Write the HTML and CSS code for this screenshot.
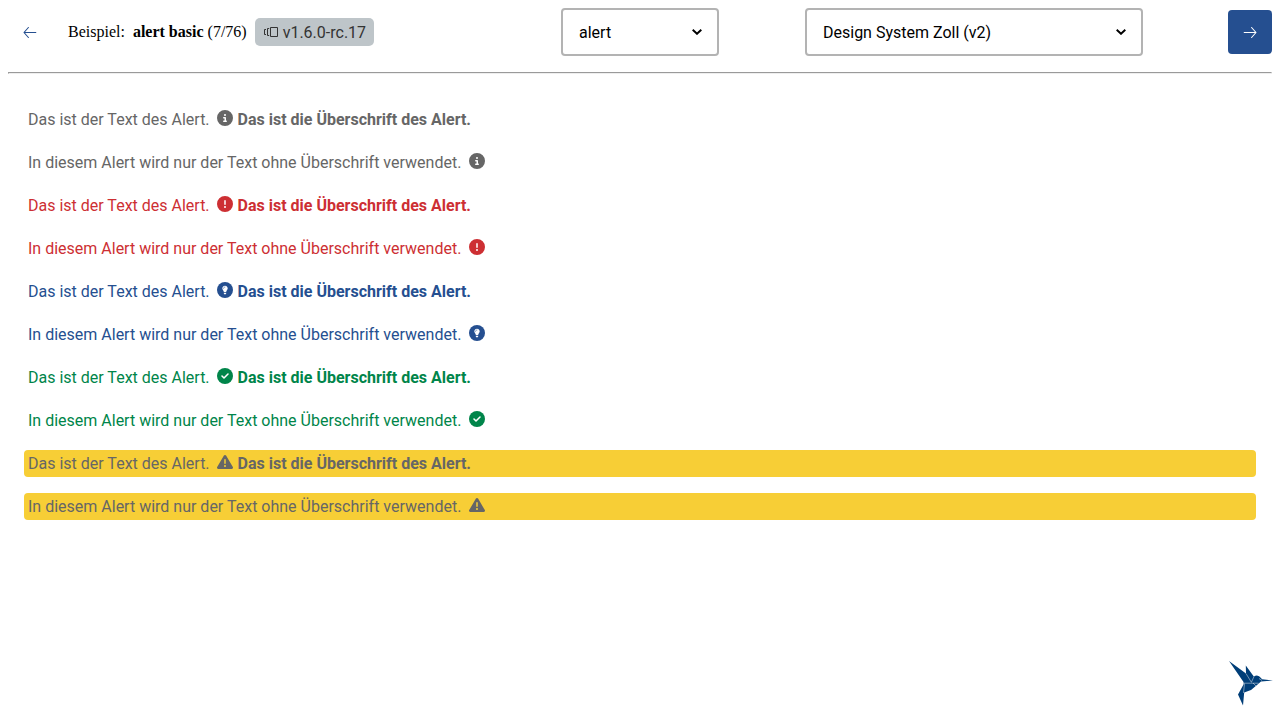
FILE: index.html
```html
<!DOCTYPE html>
<html lang="de">
<head>
<meta charset="utf-8">
<title>alert basic</title>
<link rel="stylesheet" href="styles.css">
</head>
<body>
<svg class="defs" aria-hidden="true">
  <symbol id="info" viewBox="0 0 512 512"><path fill="currentColor" fill-rule="evenodd" d="M256 512A256 256 0 1 0 256 0a256 256 0 1 0 0 512zM216 336h24v-64h-24c-13.300 0-24-10.700-24-24s10.700-24 24-24h48c13.300 0 24 10.700 24 24v88h8c13.300 0 24 10.700 24 24s-10.700 24-24 24h-80c-13.300 0-24-10.700-24-24s10.700-24 24-24zm40-208a32 32 0 1 1 0 64 32 32 0 1 1 0-64z"/></symbol>
  <symbol id="error" viewBox="0 0 512 512"><path fill="currentColor" fill-rule="evenodd" d="M256 512A256 256 0 1 0 256 0a256 256 0 1 0 0 512zm0-384c13.300 0 24 10.700 24 24v112c0 13.300-10.700 24-24 24s-24-10.700-24-24V152c0-13.300 10.700-24 24-24zm-32 224a32 32 0 1 1 64 0 32 32 0 1 1-64 0z"/></symbol>
  <symbol id="bulb" viewBox="0 0 512 512"><circle cx="256" cy="256" r="256" fill="currentColor"/><path fill="#fff" d="M256 116c-48 0-87 38-87 86 0 28 12 44 25 61 11 16 23 31 25 53h74c2-22 14-37 25-53 13-17 25-33 25-61 0-48-39-86-87-86zM218 346h76v16c0 20-16 36-38 36s-38-16-38-36z"/><path fill="none" stroke="currentColor" stroke-width="17" stroke-linecap="round" d="M208 203c0-25 21-44 46-44"/></symbol>
  <symbol id="success" viewBox="0 0 512 512"><circle cx="256" cy="256" r="256" fill="currentColor"/><path fill="none" stroke="#fff" stroke-width="50" stroke-linecap="round" stroke-linejoin="round" d="M160 256l64 64 128-128"/></symbol>
  <symbol id="warning" viewBox="0 0 512 512"><path fill="currentColor" fill-rule="evenodd" d="M256 32c14.200 0 27.300 7.500 34.500 19.800l216 368c7.300 12.400 7.300 27.700.200 40.100S486.300 480 472 480H40c-14.300 0-27.600-7.700-34.700-20.100s-7-27.800.200-40.100l216-368C228.700 39.500 241.800 32 256 32zm0 128c-13.300 0-24 10.700-24 24v112c0 13.300 10.700 24 24 24s24-10.700 24-24V184c0-13.300-10.700-24-24-24zm32 224a32 32 0 1 0-64 0 32 32 0 1 0 64 0z"/></symbol>
  <symbol id="chevron" viewBox="0 0 10 6"><path fill="none" stroke="currentColor" stroke-width="1.900" d="M.7.700L5 4.800 9.300.700"/></symbol>
</svg>
<header class="topbar">
  <div class="intro">
    <button class="nav-button" aria-label="Zurück"><svg viewBox="0 0 14 14"><path d="M12.800 7.500H1.500M5.400 2.500L1 7.500l4.400 5"/></svg></button>
    <span class="example">Beispiel:&nbsp; <b>alert basic</b> (7/76)</span>
    <span class="badge"><svg viewBox="0 0 15 12"><path d="M3 3.500H1.500v5H3M6.200 2.500H4.500v7h1.700M7.500 1.500h7v9h-7z"/></svg>v1.6.0-rc.17</span>
  </div>
  <div class="select-box component-select"><select aria-label="Komponente"><option>alert</option></select><svg><use href="#chevron"/></svg></div>
  <div class="select-box theme-select"><select aria-label="Theme"><option>Design System Zoll (v2)</option></select><svg><use href="#chevron"/></svg></div>
  <button class="nav-button primary" aria-label="Weiter"><svg viewBox="0 0 14 14"><path d="M1.200 7.500h11.300M8.600 2.500l4.400 5-4.400 5"/></svg></button>
</header>
<hr class="divider">
<main class="alerts">
  <div class="alert neutral"><span>Das ist der Text des Alert.</span><svg><use href="#info"/></svg><strong>Das ist die Überschrift des Alert.</strong></div>
  <div class="alert neutral"><span>In diesem Alert wird nur der Text ohne Überschrift verwendet.</span><svg><use href="#info"/></svg></div>
  <div class="alert error"><span>Das ist der Text des Alert.</span><svg><use href="#error"/></svg><strong>Das ist die Überschrift des Alert.</strong></div>
  <div class="alert error"><span>In diesem Alert wird nur der Text ohne Überschrift verwendet.</span><svg><use href="#error"/></svg></div>
  <div class="alert info"><span>Das ist der Text des Alert.</span><svg><use href="#bulb"/></svg><strong>Das ist die Überschrift des Alert.</strong></div>
  <div class="alert info"><span>In diesem Alert wird nur der Text ohne Überschrift verwendet.</span><svg><use href="#bulb"/></svg></div>
  <div class="alert success"><span>Das ist der Text des Alert.</span><svg><use href="#success"/></svg><strong>Das ist die Überschrift des Alert.</strong></div>
  <div class="alert success"><span>In diesem Alert wird nur der Text ohne Überschrift verwendet.</span><svg><use href="#success"/></svg></div>
  <div class="alert warning"><span>Das ist der Text des Alert.</span><svg><use href="#warning"/></svg><strong>Das ist die Überschrift des Alert.</strong></div>
  <div class="alert warning"><span>In diesem Alert wird nur der Text ohne Überschrift verwendet.</span><svg><use href="#warning"/></svg></div>
</main>
<svg class="bird" viewBox="0 0 44 46">
  <path fill="#003e78" d="M0 0L17 12.500 16.800 4.500 24.800 15.500Q29 12.800 32 17L33 18.200 44 19.600 32 20.500 28 24 22 29 15.200 31.500 14 44.500 9 33.500 14.500 23.500 14.500 21z"/>
  <path fill="none" stroke="#fff" stroke-width=".45" d="M14 22.200H29.500M17 12.500L22.500 21.500M25 15.500L22.500 21M14.500 32L15.500 22.500M24 22L27 25M30 17.500L33 19.500"/>
</svg>
</body>
</html>
```
FILE: styles.css
```css
body {
  margin: 8px;
  font-family: "Liberation Serif", "Times New Roman", serif;
  font-size: 16px;
  color: #000;
}
.defs { display: none; }
.topbar {
  display: flex;
  align-items: center;
  height: 48px;
}
.intro {
  display: flex;
  align-items: center;
  width: 553px;
}
.nav-button {
  display: flex;
  align-items: center;
  justify-content: center;
  width: 44px;
  height: 44px;
  padding: 0;
  border: 0;
  border-radius: 4px;
  background: none;
  color: #254f90;
}
.nav-button.primary { margin-left: auto; background: #254f90; color: #fff; }
.nav-button svg { width: 14px; height: 14px; fill: none; stroke: currentColor; stroke-width: 1.100; stroke-linecap: round; stroke-linejoin: round; }
.example { margin-left: 16px; white-space: nowrap; }
.badge {
  display: flex;
  align-items: center;
  gap: 5px;
  box-sizing: border-box;
  width: 119px;
  height: 28px;
  margin-left: 8px;
  padding: 0 8px;
  border-radius: 5px;
  background: #bec5c9;
  color: #333;
  font-family: Roboto, sans-serif;
  white-space: nowrap;
}
.badge svg { flex: none; width: 15px; height: 12px; fill: none; stroke: currentColor; }
.select-box { display: grid; align-items: center; height: 48px; }
.select-box > * { grid-area: 1 / 1; }
.select-box select {
  box-sizing: border-box;
  appearance: none;
  width: 100%;
  height: 48px;
  padding: 0 16px;
  border: 2px solid #b3b3b3;
  border-radius: 4px;
  background: #fff;
  color: #000;
  font: 16px Roboto, sans-serif;
}
.select-box svg {
  justify-self: end;
  width: 10px;
  height: 6px;
  margin-right: 17px;
  pointer-events: none;
}
.component-select { width: 158px; }
.theme-select { width: 338px; margin-left: 86px; }
.divider { margin: 16px 0 0; }
.alerts {
  display: flex;
  flex-direction: column;
  gap: 16px;
  padding: 32px 16px;
  font-family: Roboto, sans-serif;
}
.alert {
  display: flex;
  align-items: center;
  height: 27px;
  padding: 0 4px;
  border-radius: 4px;
}
.alert svg { width: 16px; height: 16px; margin: -3px 4.300px 0 7.700px; }
.neutral { color: #666; }
.error { color: #cd2f33; }
.info { color: #254f90; }
.success { color: #00854a; }
.warning { background: #f7ce36; color: #666; }
.bird {
  position: fixed;
  right: 7px;
  bottom: 13px;
  width: 44px;
  height: 46px;
}
```
